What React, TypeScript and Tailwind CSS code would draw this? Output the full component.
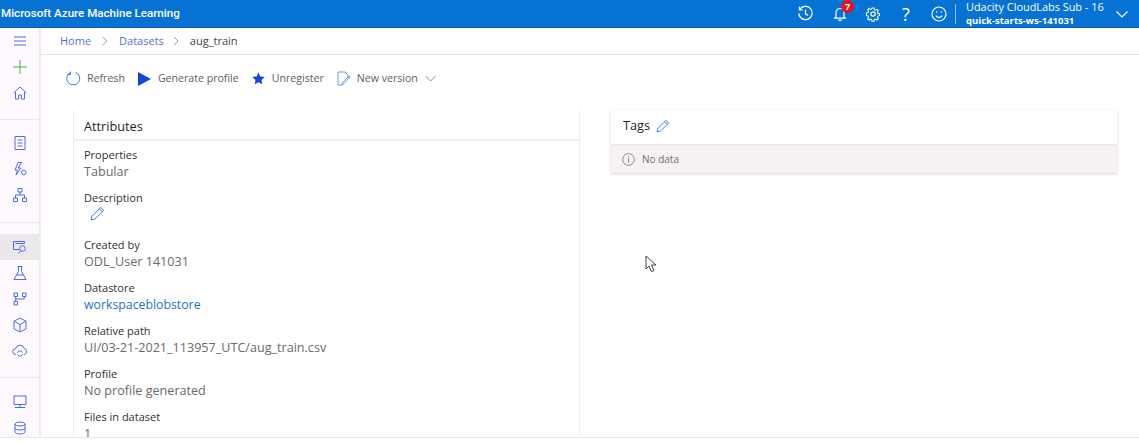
import { ReactNode } from "react";

const font = { fontFamily: '"Open Sans", "Noto Sans", sans-serif' };

function NavIcon({ children, active }: { children: ReactNode; active?: boolean }) {
  return (
    <div className={`h-[26px] w-full flex items-center justify-center ${active ? "bg-[#ebe8ea]" : ""}`}>
      <svg width="16" height="16" viewBox="0 0 16 16" fill="none" stroke="#4f6bed" strokeWidth="1">
        {children}
      </svg>
    </div>
  );
}

function Pencil({ size = 16 }: { size?: number }) {
  return (
    <svg width={size} height={size} viewBox="0 0 16 16" fill="none" stroke="#2b6fe0" strokeWidth="1">
      <path d="M11.5 1.5l3 3L5 14l-3.8.8L2 11z" />
      <path d="M10 3l3 3" />
    </svg>
  );
}

function Attr({ label, children }: { label: string; children: ReactNode }) {
  return (
    <div className="h-[43px]">
      <div className="text-[11px] leading-[16px] text-[#323130]">{label}</div>
      <div className="text-[12.6px] leading-[17px] text-[#6b6967]">{children}</div>
    </div>
  );
}

export default function App() {
  return (
    <div className="relative h-[442px] w-[1139px] overflow-hidden bg-white flex flex-col pb-[4px]" style={font}>
      {/* top bar */}
      <header className="h-[28px] shrink-0 bg-[#0672d3] border-b border-[#0a5cb0] text-white flex items-center">
        <div className="text-[11.6px] font-medium pl-[1px]" style={{ fontFamily: "Roboto, sans-serif" }}>
          Microsoft Azure Machine Learning
        </div>
        <div className="ml-auto flex items-center">
          <svg className="mr-[18px]" width="17" height="17" viewBox="0 0 16 16" fill="none" stroke="white" strokeWidth="1.2">
            <path d="M2.6 4.2A6.3 6.3 0 1 1 1.7 8" />
            <path d="M2.3 1.6v2.9h2.9" />
            <path d="M8 4.5V8.3l2.5 1.6" />
          </svg>
          <div className="relative mr-[17px]">
            <svg width="16" height="16" viewBox="0 0 16 16" fill="none" stroke="white" strokeWidth="1.2">
              <path d="M4 11V6.5a4 4 0 0 1 8 0V11l1.2 1.2H2.8z" />
              <path d="M6.5 13.5a1.6 1.6 0 0 0 3 0" />
            </svg>
            <div className="absolute top-[-6px] right-[-6px] h-[13px] w-[13px] rounded-full bg-[#e81123] text-[9px] leading-[13px] font-bold text-center">
              7
            </div>
          </div>
          <svg className="mr-[18px]" width="16" height="16" viewBox="0 0 16 16" fill="none" stroke="white" strokeWidth="1.2">
            <circle cx="8" cy="8" r="2.2" />
            <path d="M6.8 1h2.4l.4 2 1.3.6 1.8-1.1 1.6 1.7-1.1 1.7.5 1.3 2 .4v2.4l-2 .4-.5 1.3 1.1 1.7-1.6 1.7-1.8-1.1-1.3.6-.4 2H6.8l-.4-2-1.3-.6-1.8 1.1-1.6-1.7 1.1-1.7-.5-1.3-2-.4V6.6l2-.4.5-1.3-1.1-1.7 1.6-1.7 1.8 1.1 1.3-.6z" transform="translate(1.2 1.2) scale(.85)" />
          </svg>
          <div className="mr-[18px] w-[14px] text-center text-[18px] leading-none">?</div>
          <svg className="mr-[8px]" width="16" height="16" viewBox="0 0 16 16" fill="none" stroke="white" strokeWidth="1.2">
            <circle cx="8" cy="8" r="7" />
            <path d="M4.8 9.6c1.6 2.4 4.8 2.4 6.4 0" />
            <circle cx="5.6" cy="6" r=".8" fill="white" stroke="none" />
            <circle cx="10.4" cy="6" r=".8" fill="white" stroke="none" />
          </svg>
          <div className="h-[20px] w-px bg-[#8fc1ec] mr-[10px]" />
          <div className="w-[149px]">
            <div className="text-[10.9px] leading-[14px] whitespace-nowrap">Udacity CloudLabs Sub - 16</div>
            <div className="text-[9.5px] leading-[13px] font-bold whitespace-nowrap">quick-starts-ws-141031</div>
          </div>
          <svg className="mr-[10px]" width="14" height="14" viewBox="0 0 14 14" fill="none" stroke="white" strokeWidth="1.1">
            <path d="M1.5 4.5L7 10l5.5-5.5" />
          </svg>
        </div>
      </header>

      <div className="flex-1 min-h-0 flex border-b border-[#e9e8ec]">
        {/* left rail */}
        <nav className="w-[41px] shrink-0 bg-[#fdf9fe] border-r-2 border-[#efeaef] flex flex-col">
          <div className="h-[92px] shrink-0 border-b border-[#ece7ec]">
            <NavIcon>
              <path d="M2 4h12M2 8h12M2 12h12" />
            </NavIcon>
            <NavIcon>
              <path d="M8 1v14M1 8h14" stroke="#3fb53f" />
            </NavIcon>
            <NavIcon>
              <path d="M1.5 8L8 2l6.5 6M3.5 7v7h3.2v-4h2.6v4h3.2V7" />
            </NavIcon>
          </div>
          <div className="h-[103px] shrink-0 pt-[10px] border-b border-[#ece7ec]">
            <NavIcon>
              <path d="M3 1.5h10v13H3zM5.5 5h5M5.5 8h5M5.5 11h5" />
            </NavIcon>
            <NavIcon>
              <path d="M6 1.5h3.5L6 7h3l-5 7 1.5-5H3z" />
              <circle cx="11.8" cy="11.5" r="2.3" />
            </NavIcon>
            <NavIcon>
              <path d="M6 1.5h4V5H6zM1.5 11h4v3.500h-4zM10.5 11h4v3.500h-4zM8 5v3M3.5 11V8h9v3" />
            </NavIcon>
          </div>
          <div className="h-[155px] shrink-0 pt-[11px] border-b border-[#ece7ec]">
            <NavIcon active>
              <path d="M1.5 2.5h11v2M1.5 2.5v8h6M3.5 4.5h9" />
              <circle cx="10.5" cy="9.5" r="2.8" />
              <path d="M8.500 11.8L6.5 14.5" />
            </NavIcon>
            <NavIcon>
              <path d="M5.5 1.5h5M6.5 1.5v5L2 14.5h12L9.5 6.500v-5M4.5 10h7" />
            </NavIcon>
            <NavIcon>
              <path d="M2 2h3.5v3.5H2zM10.500 2H14v3.500h-3.500zM2 10.5h3.500V14H2zM3.7 5.500v5M12.2 5.500V8H3.700" />
            </NavIcon>
            <NavIcon>
              <path d="M8 1l6 3.2v7.600L8 15l-6-3.200V4.200zM2 4.200L8 7.500l6-3.300M8 7.500V15" />
            </NavIcon>
            <NavIcon>
              <path d="M4 11.500H3.500a2.800 2.800 0 0 1 0-5.600 4.500 4.500 0 0 1 8.700-.5 3.200 3.200 0 0 1 .3 6.100H12" />
              <path d="M5.500 10a2.500 2.500 0 0 1 4.800-.5M10.500 11a2.500 2.500 0 0 1-4.800.5" />
            </NavIcon>
          </div>
          <div className="pt-[11px]">
            <NavIcon>
              <path d="M2 2h12v8.500H2zM8 10.500v2.500M3 13.500h10" />
            </NavIcon>
            <NavIcon>
              <ellipse cx="8" cy="4" rx="5" ry="2" />
              <path d="M3 4v8c0 1 2.200 2 5 2s5-1 5-2V4M3 8c0 1 2.200 2 5 2s5-1 5-2" />
            </NavIcon>
          </div>
        </nav>

        <main className="flex-1 min-w-0 flex flex-col">
          {/* breadcrumb */}
          <div className="h-[27px] shrink-0 border-b border-[#e6e4e3] pl-[19px] flex items-center text-[11px]">
            <span className="text-[#5b6fd8]">Home</span>
            <svg className="mx-[10.5px]" width="7" height="10" viewBox="0 0 7 10" fill="none" stroke="#a19f9d"><path d="M1 1l4 4-4 4" /></svg>
            <span className="text-[#5b6fd8]">Datasets</span>
            <svg className="mx-[9.5px]" width="7" height="10" viewBox="0 0 7 10" fill="none" stroke="#a19f9d"><path d="M1 1l4 4-4 4" /></svg>
            <span className="text-[#484644]">aug_train</span>
          </div>

          {/* toolbar */}
          <div className="h-[47px] shrink-0 pl-[25px] flex items-center text-[10.6px] text-[#605e5c]">
            <svg className="mr-[6px]" width="15" height="15" viewBox="0 0 15 15" fill="none" stroke="#3f77e0" strokeWidth="1">
              <path d="M5 1.3A6.5 6.5 0 1 0 9.5 1.3" />
              <path d="M4.5 .5v3h-3" />
            </svg>
            <span className="mr-[13px]">Refresh</span>
            <svg className="mr-[7px]" width="13" height="14" viewBox="0 0 13 14"><path d="M0 0l13 7-13 7z" fill="#1447d8" /></svg>
            <span className="mr-[13px]">Generate profile</span>
            <svg className="mr-[7px]" width="13" height="13" viewBox="0 0 24 24"><path d="M12 1l3.4 7.4 8.100.9-6 5.500 1.700 8L12 18.700 4.800 22.800l1.700-8-6-5.500 8.100-.9z" fill="#1447d8" /></svg>
            <span className="mr-[13px]">Unregister</span>
            <svg className="mr-[6px]" width="14" height="15" viewBox="0 0 14 15" fill="none" stroke="#6f97e8" strokeWidth="1">
              <path d="M5 14H1V1h7l3 3v3M13 6L7 12.5 5 14l.5-2.5L12 5z" />
            </svg>
            <span className="mr-[7px]">New version</span>
            <svg width="11" height="7" viewBox="0 0 11 7" fill="none" stroke="#8a8886"><path d="M.5 1l5 5 5-5" /></svg>
          </div>

          {/* cards */}
          <div className="flex-1 min-h-0 flex pl-[32px] pt-[8px] overflow-hidden">
            <section className="w-[507px] shrink-0 border-x border-[#efeeef]">
              <div className="h-[31px] border-b-2 border-[#eeecec] pl-[10px] pt-[7px] text-[12.7px] leading-[18px] text-[#252423]">
                Attributes
              </div>
              <div className="pl-[10px] pt-[6px]">
                <Attr label="Properties">Tabular</Attr>
                <div className="h-[47px]">
                  <div className="text-[11px] leading-[16px] text-[#323130]">Description</div>
                  <div className="pl-[6px]"><Pencil size={15} /></div>
                </div>
                <Attr label="Created by">ODL_User 141031</Attr>
                <Attr label="Datastore"><span className="text-[12.3px] text-[#1a75c4]">workspaceblobstore</span></Attr>
                <Attr label="Relative path">UI/03-21-2021_113957_UTC/aug_train.csv</Attr>
                <Attr label="Profile">No profile generated</Attr>
                <Attr label="Files in dataset">1</Attr>
              </div>
            </section>

            <section className="ml-[31px] w-[506px] self-start shadow-[0_1px_3px_rgba(0,0,0,0.18)]">
              <div className="h-[36px] pl-[12px] pb-[2px] flex items-center gap-[6px] text-[12.7px] text-[#252423] border-b-2 border-[#ece8ec]">
                Tags <Pencil size={14} />
              </div>
              <div className="h-[27px] bg-[#f7f1f6] pl-[11px] flex items-center gap-[7px] text-[10px] text-[#6f6d6b]">
                <svg width="13" height="13" viewBox="0 0 13 13" fill="none" stroke="#8a8886">
                  <circle cx="6.5" cy="6.5" r="5.8" />
                  <path d="M6.5 5.5v4M6.5 3.3v1" />
                </svg>
                No data
              </div>
            </section>
          </div>
        </main>
      </div>

      {/* mouse pointer from the recording */}
      <svg className="absolute left-[645px] top-[255px]" width="13" height="18" viewBox="0 0 13 18" fill="white" stroke="#444">
        <path d="M1 1v13l3-3 2.5 5.5 2.5-1L6.5 10H11z" />
      </svg>
    </div>
  );
}
